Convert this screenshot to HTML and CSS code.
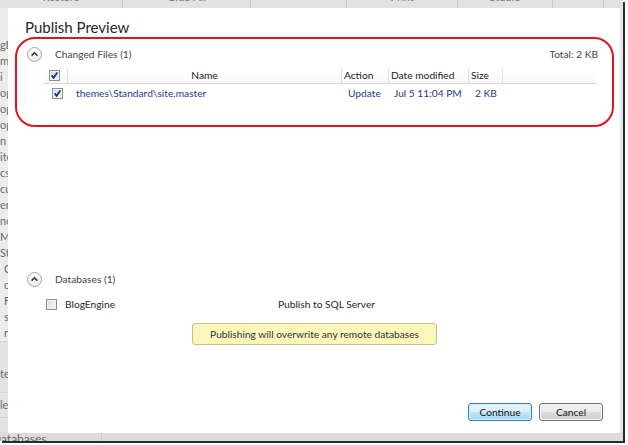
FILE: index.html
```html
<!DOCTYPE html>
<html>
<head>
<meta charset="utf-8">
<title>Publish Preview</title>
<link rel="stylesheet" href="styles.css">
</head>
<body>
<div class="shot">
  <div class="toolbar">
    <div class="tb-item w1"><span>Restore</span></div>
    <div class="tb-item w2"><span>Grab All</span></div>
    <div class="tb-item w3"><span></span></div>
    <div class="tb-item w4"><span>Print</span></div>
    <div class="tb-item w5"><span>Studio</span></div>
    <div class="tb-item w6"><span></span></div>
    <div class="tb-item w7"><span></span></div>
  </div>
  <div class="app-main">
    <div class="sidebar">
      <ul class="side-list">
        <li>gE</li><li>m</li><li>i</li><li>op</li><li>op</li><li>op</li><li>n</li><li>ite</li><li>cs</li><li>cu</li><li>er</li><li>nc</li><li>Me</li><li>Sta</li><li class="ind">C</li><li class="ind">c</li><li class="ind">F</li><li class="ind">s</li><li class="ind">r</li>
      </ul>
      <div class="side-lower">
        <div class="lower-item a">te</div>
        <div class="lower-item b">le</div>
      </div>
    </div>
  </div>
  <div class="statusbar"><span class="status-seg">Databases</span></div>

  <div class="dialog">
    <div class="annotation"></div>
    <div class="dlg-title">Publish Preview</div>

    <div class="sec-head">
      <span class="toggle"><svg viewBox="0 0 13 13" width="13" height="13"><path d="M3.6 7.6 L6.5 4.8 L9.4 7.6" fill="none" stroke="#333" stroke-width="1.5"/></svg></span>
      <span class="sec-label">Changed Files (1)</span>
      <span class="sec-total">Total: 2 KB</span>
    </div>

    <div class="files">
      <div class="f-row f-head">
        <div class="c c-cb"><span class="cb checked"><svg viewBox="0 0 9 9" width="9" height="9"><path d="M1.6 4.4 L3.6 6.8 L7.4 1.4" fill="none" stroke="#1b2f86" stroke-width="1.7"/></svg></span></div>
        <div class="c c-name">Name</div>
        <div class="c c-act">Action</div>
        <div class="c c-date">Date modified</div>
        <div class="c c-size">Size</div>
        <div class="c c-rest"></div>
      </div>
      <div class="f-row f-item">
        <div class="c c-cb"><span class="cb checked"><svg viewBox="0 0 9 9" width="9" height="9"><path d="M1.6 4.4 L3.6 6.8 L7.4 1.4" fill="none" stroke="#1b2f86" stroke-width="1.7"/></svg></span></div>
        <div class="c c-name">themes\Standard\site.master</div>
        <div class="c c-act">Update</div>
        <div class="c c-date">Jul 5 11:04 PM</div>
        <div class="c c-size">2 KB</div>
        <div class="c c-rest"></div>
      </div>
    </div>

    <div class="spacer"></div>

    <div class="sec-head">
      <span class="toggle"><svg viewBox="0 0 13 13" width="13" height="13"><path d="M3.6 7.6 L6.5 4.8 L9.4 7.6" fill="none" stroke="#333" stroke-width="1.5"/></svg></span>
      <span class="sec-label">Databases (1)</span>
    </div>
    <div class="db-row">
      <span class="cb"></span>
      <span class="db-name">BlogEngine</span>
      <span class="db-target">Publish to SQL Server</span>
    </div>
    <div class="warning">Publishing will overwrite any remote databases</div>

    <div class="footer">
      <button class="btn primary">Continue</button>
      <button class="btn">Cancel</button>
    </div>
  </div>
</div>
</body>
</html>
```

FILE: styles.css
```css
* { box-sizing: border-box; }
html, body { margin: 0; padding: 0; }
body {
  width: 628px;
  height: 445px;
  overflow: hidden;
  background: #ffffff;
  font-family: Lato, "Open Sans", sans-serif;
}

.shot {
  position: relative;
  width: 623px;
  height: 441px;
  background: #e7e7e7;
  box-shadow: 2px 2px 0 #2c2c2c;
  display: grid;
  grid-template-rows: 8px 1fr 9px;
  overflow: hidden;
}

/* background application */
.toolbar {
  display: flex;
  background: #e2e2e2;
  overflow: hidden;
}
.tb-item {
  border-right: 1px solid #cacaca;
  display: flex;
  justify-content: center;
  overflow: hidden;
}
.tb-item span {
  font-size: 11px;
  line-height: 12px;
  margin-top: -9px;
  color: #777;
}
.w1 { width: 123px; }
.w2 { width: 128px; }
.w3 { width: 96px; }
.w4 { width: 111px; }
.w5 { width: 95px; }
.w6 { width: 51px; }
.w7 { width: 19px; border-right: none; }

.app-main {
  display: flex;
  overflow: hidden;
}
.sidebar {
  width: 60px;
  display: flex;
  flex-direction: column;
  background: #ececec;
}
.side-list {
  list-style: none;
  margin: 0;
  padding: 29px 0 0 0;
}
.side-list li {
  height: 16px;
  line-height: 16px;
  font-size: 11px;
  color: #6a6a6a;
  white-space: nowrap;
}
.side-list li.ind { padding-left: 4px; }
.side-lower {
  flex: 1;
  border-top: 1px solid #d0d0d0;
  background: #e3e3e3;
}
.lower-item {
  font-size: 11px;
  color: #6a6a6a;
  border-bottom: 1px solid #d2d2d2;
}
.lower-item.a { height: 51px; padding-top: 25px; }
.lower-item.b { height: 25px; padding-top: 5px; }

.statusbar {
  background: #dcdcdc;
  overflow: hidden;
  display: flex;
}
.status-seg {
  width: 110px;
  border-right: 1px solid #c8c8c8;
  font-size: 12px;
  line-height: 12px;
  color: #666;
  margin-left: -8px;
  margin-top: 1px;
}

/* dialog window */
.dialog {
  position: absolute;
  left: 8px;
  top: 8px;
  width: 612px;
  height: 425px;
  background: #ffffff;
  display: flex;
  flex-direction: column;
  font-size: 10.2px;
  color: #3a3a3a;
}
.annotation {
  position: absolute;
  left: 7px;
  top: 29px;
  width: 599px;
  height: 90px;
  border: 2px solid #e0161e;
  border-radius: 20px;
  pointer-events: none;
}
.dlg-title {
  height: 38px;
  line-height: 38px;
  padding-left: 17px;
  font-size: 15px;
  color: #262626;
}

.sec-head {
  height: 16px;
  display: flex;
  align-items: center;
  padding-left: 19px;
  padding-right: 22px;
}
.toggle {
  width: 15px;
  height: 15px;
  border-radius: 50%;
  border: 1px solid #a3a3a3;
  background: linear-gradient(#ffffff, #ececec);
  display: flex;
  align-items: center;
  justify-content: center;
}
.sec-label {
  margin-left: 13px;
  color: #444;
  line-height: 16px;
}
.sec-total {
  margin-left: auto;
  color: #444;
  line-height: 16px;
}

.files {
  margin: 6px 0 0 35px;
  width: 554px;
}
.f-row {
  display: grid;
  grid-template-columns: 25px 274px 47px 80px 34px 1fr;
}
.f-head {
  height: 16px;
  border-bottom: 1px solid #d6d6d6;
  color: #222;
  background: linear-gradient(#ffffff, #fafafa);
}
.f-head .c {
  border-right: 1px solid #e2e2e2;
  line-height: 15px;
  padding-left: 2px;
  white-space: nowrap;
}
.f-head .c-rest { border-right: none; }
.f-head .c-name { text-align: center; padding-left: 0; }
.f-head .c-cb { padding-left: 6px; display: flex; align-items: center; }

.f-item {
  height: 18px;
  color: #1f3a8c;
}
.f-item .c {
  line-height: 18px;
  white-space: nowrap;
}
.f-item .c-cb { padding-left: 9px; display: flex; align-items: center; padding-top: 1px; }
.f-item .c-name { padding-left: 8px; }
.f-item .c-act { padding-left: 6px; }
.f-item .c-date { padding-left: 5px; }
.f-item .c-size { padding-left: 6px; }

.cb {
  width: 11px;
  height: 11px;
  border: 1px solid #8e8f8f;
  background: linear-gradient(135deg, #d6d9dd, #f7f8f9);
  box-shadow: inset 0 0 0 1px #f1f1f1;
  display: flex;
  align-items: center;
  justify-content: center;
}
.cb.checked {
  background: linear-gradient(135deg, #cfd7e2, #f2f5f8);
}

.spacer { flex: 1; }

.db-row {
  height: 18px;
  margin-top: 8px;
  display: flex;
  align-items: center;
  padding-left: 38px;
}
.db-name {
  margin-left: 8px;
  width: 213px;
  color: #262626;
  line-height: 18px;
}
.db-target {
  color: #262626;
  line-height: 18px;
}

.warning {
  margin: 10px 0 0 184px;
  width: 245px;
  height: 22px;
  line-height: 20px;
  text-align: center;
  background: #fbf7bb;
  border: 1px solid #c8c08c;
  border-radius: 3px;
  color: #333;
}

.footer {
  margin-top: 58px;
  padding: 0 17px 12px 0;
  display: flex;
  justify-content: flex-end;
  gap: 7px;
}
.btn {
  width: 64px;
  height: 18px;
  padding: 0;
  font-family: Lato, "Open Sans", sans-serif;
  font-size: 10.2px;
  color: #111;
  border: 1px solid #707070;
  border-radius: 3px;
  background: linear-gradient(#f3f3f3 0%, #ebebeb 50%, #dddddd 51%, #cfcfcf 100%);
  box-shadow: inset 0 0 0 1px #fafafa;
}
.btn.primary {
  border-color: #3c7fb1;
  background: linear-gradient(#eaf6fd 0%, #d9f0fc 50%, #bee6fd 51%, #a7d9f5 100%);
  box-shadow: inset 0 0 0 1px #d8eefb;
}
```
